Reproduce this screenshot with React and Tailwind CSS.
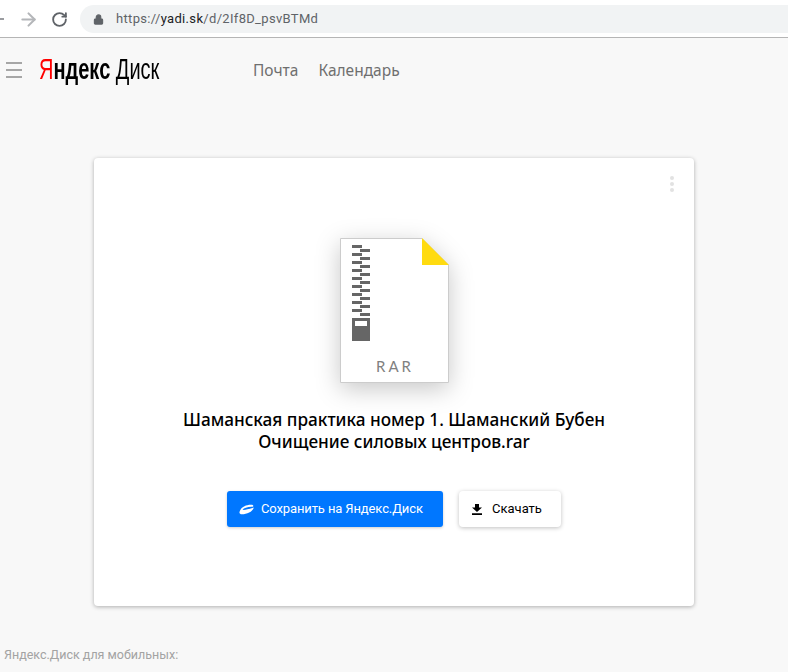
import { ArrowRight, RotateCw, Lock } from 'lucide-react';

const teeth = [0, 1, 2, 3, 4, 5, 6, 7, 8];

function FileIcon() {
  return (
    <div className="relative w-[110px] h-[146px] ml-[246px]">
      <svg width="110" height="146" viewBox="0 0 110 146" className="drop-shadow-[0_6px_12px_rgba(0,0,0,0.22)]">
        <path d="M.5.5H82L108.500 27V144.500H.5Z" fill="#fff" stroke="#ccc" />
        <path d="M82 0L109 27H82Z" fill="#ffdb10" />
        {teeth.map(i => (
          <g key={i} fill="#666">
            <rect x="12" y={7 + i * 8} width="10" height="3" />
            <rect x="20" y={11 + i * 8} width="10" height="3" />
          </g>
        ))}
        <rect x="12" y="80" width="18" height="23" fill="#666" />
        <rect x="15" y="83" width="12" height="5" fill="#fff" />
      </svg>
      <span className="absolute left-0 right-0 top-[119px] text-center text-[15px] leading-[18px] tracking-[3px] text-[#808080] font-['Lato',sans-serif]">RAR</span>
    </div>
  );
}

function BrowserBar() {
  return (
    <div className="h-[38px] bg-white border-b border-[#b5b5b5] flex items-center pt-[1px]">
      <div className="w-[9px] h-[2px] -ml-[5px] bg-[#9a9ca0]" />
      <ArrowRight className="ml-[14px] text-[#b4b6b9]" size={21} strokeWidth={2.4} />
      <RotateCw className="ml-[12px] text-[#5f6368]" size={17} strokeWidth={2.6} />
      <div className="ml-[12px] flex-1 h-[28px] bg-[#f1f3f4] rounded-l-full flex items-center pl-[13px]">
        <Lock className="text-[#5f6368] fill-[#5f6368]" size={11} strokeWidth={2.4} />
        <span className="ml-[12px] text-[13px] text-[#5f6368] font-['Roboto',sans-serif] tracking-[0.32px]">
          https://<span className="text-[#202124]">yadi.sk</span>/d/2If8D_psvBTMd
        </span>
      </div>
    </div>
  );
}

function Header() {
  return (
    <div className="flex items-center h-[64px]">
      <div className="ml-[6px] w-[16px] flex flex-col gap-[5px]">
        <div className="h-[2px] bg-[#a6a6a6]" />
        <div className="h-[2px] bg-[#a6a6a6]" />
        <div className="h-[2px] bg-[#a6a6a6]" />
      </div>
      <div className="ml-[17px] -mt-[2px] w-[120px] text-[29px] leading-none whitespace-nowrap origin-left scale-x-[0.69] font-['Liberation_Sans',sans-serif] text-black">
        <span className="font-bold"><span className="text-[#f00] font-normal">Я</span>ндекс</span> <span>Диск</span>
      </div>
      <nav className="ml-[94px] mt-[2px] flex gap-[20px] text-[15.5px] text-[#6f6f6f] font-['Noto_Sans',sans-serif]">
        <span>Почта</span>
        <span>Календарь</span>
      </nav>
    </div>
  );
}

export default function App() {
  return (
    <div className="h-[672px] overflow-hidden bg-[#f8f8f8] font-['Noto_Sans',sans-serif]">
      <BrowserBar />
      <Header />

      <div className="relative mt-[56px] mx-auto w-[600px] h-[448px] bg-white rounded-[4px] shadow-[0_1px_4px_rgba(0,0,0,0.3)] pt-[80px]">
        <div className="absolute top-[18px] right-[20px] flex flex-col gap-[2px]">
          <div className="w-1 h-1 rounded-full bg-[#e2e2e2]" />
          <div className="w-1 h-1 rounded-full bg-[#e2e2e2]" />
          <div className="w-1 h-1 rounded-full bg-[#e2e2e2]" />
        </div>

        <FileIcon />

        <h1 className="mt-[25px] text-center text-[17.2px] leading-[22px] font-medium text-black">
          Шаманская практика номер 1. Шаманский Бубен<br />
          Очищение силовых центров.rar
        </h1>

        <div className="mt-[38px] flex justify-center gap-[16px]">
          <button className="w-[216px] h-[36px] bg-[#0077ff] rounded-[3px] text-white text-[13px] tracking-[-0.12px] font-['Roboto',sans-serif] flex items-center pl-[12px] shadow-[0_1px_3px_rgba(0,0,0,0.2)]">
            <svg width="15" height="11" viewBox="0 0 15 11" className="mr-[7px]">
              <path d="M.5 8C1.500 4 6 .8 12 .8C14.500 .8 15 2.200 13.500 2.800C9 2.500 5 4 3.500 5.800C6 6.300 10 5 14.800 3.500C14 7.500 8 10.300 3 10.300C1.200 10.300 .2 9.300 .5 8Z" fill="#fff" />
            </svg>
            Сохранить на Яндекс.Диск
          </button>
          <button className="w-[102px] h-[36px] bg-white rounded-[4px] text-black text-[13px] font-['Roboto',sans-serif] flex items-center pl-[13px] shadow-[0_1px_4px_rgba(0,0,0,0.25)]">
            <svg width="10" height="11" viewBox="0 0 10 11" className="mr-[10px]">
              <path d="M3 0H7V3.500H10L5 8L0 3.500H3ZM0 9.300H10V11H0Z" fill="#000" />
            </svg>
            Скачать
          </button>
        </div>
      </div>

      <p className="mt-[40px] ml-[4px] text-[12.5px] text-[#a3a3a3] font-['Roboto',sans-serif]">Яндекс.Диск для мобильных:</p>
    </div>
  );
}
